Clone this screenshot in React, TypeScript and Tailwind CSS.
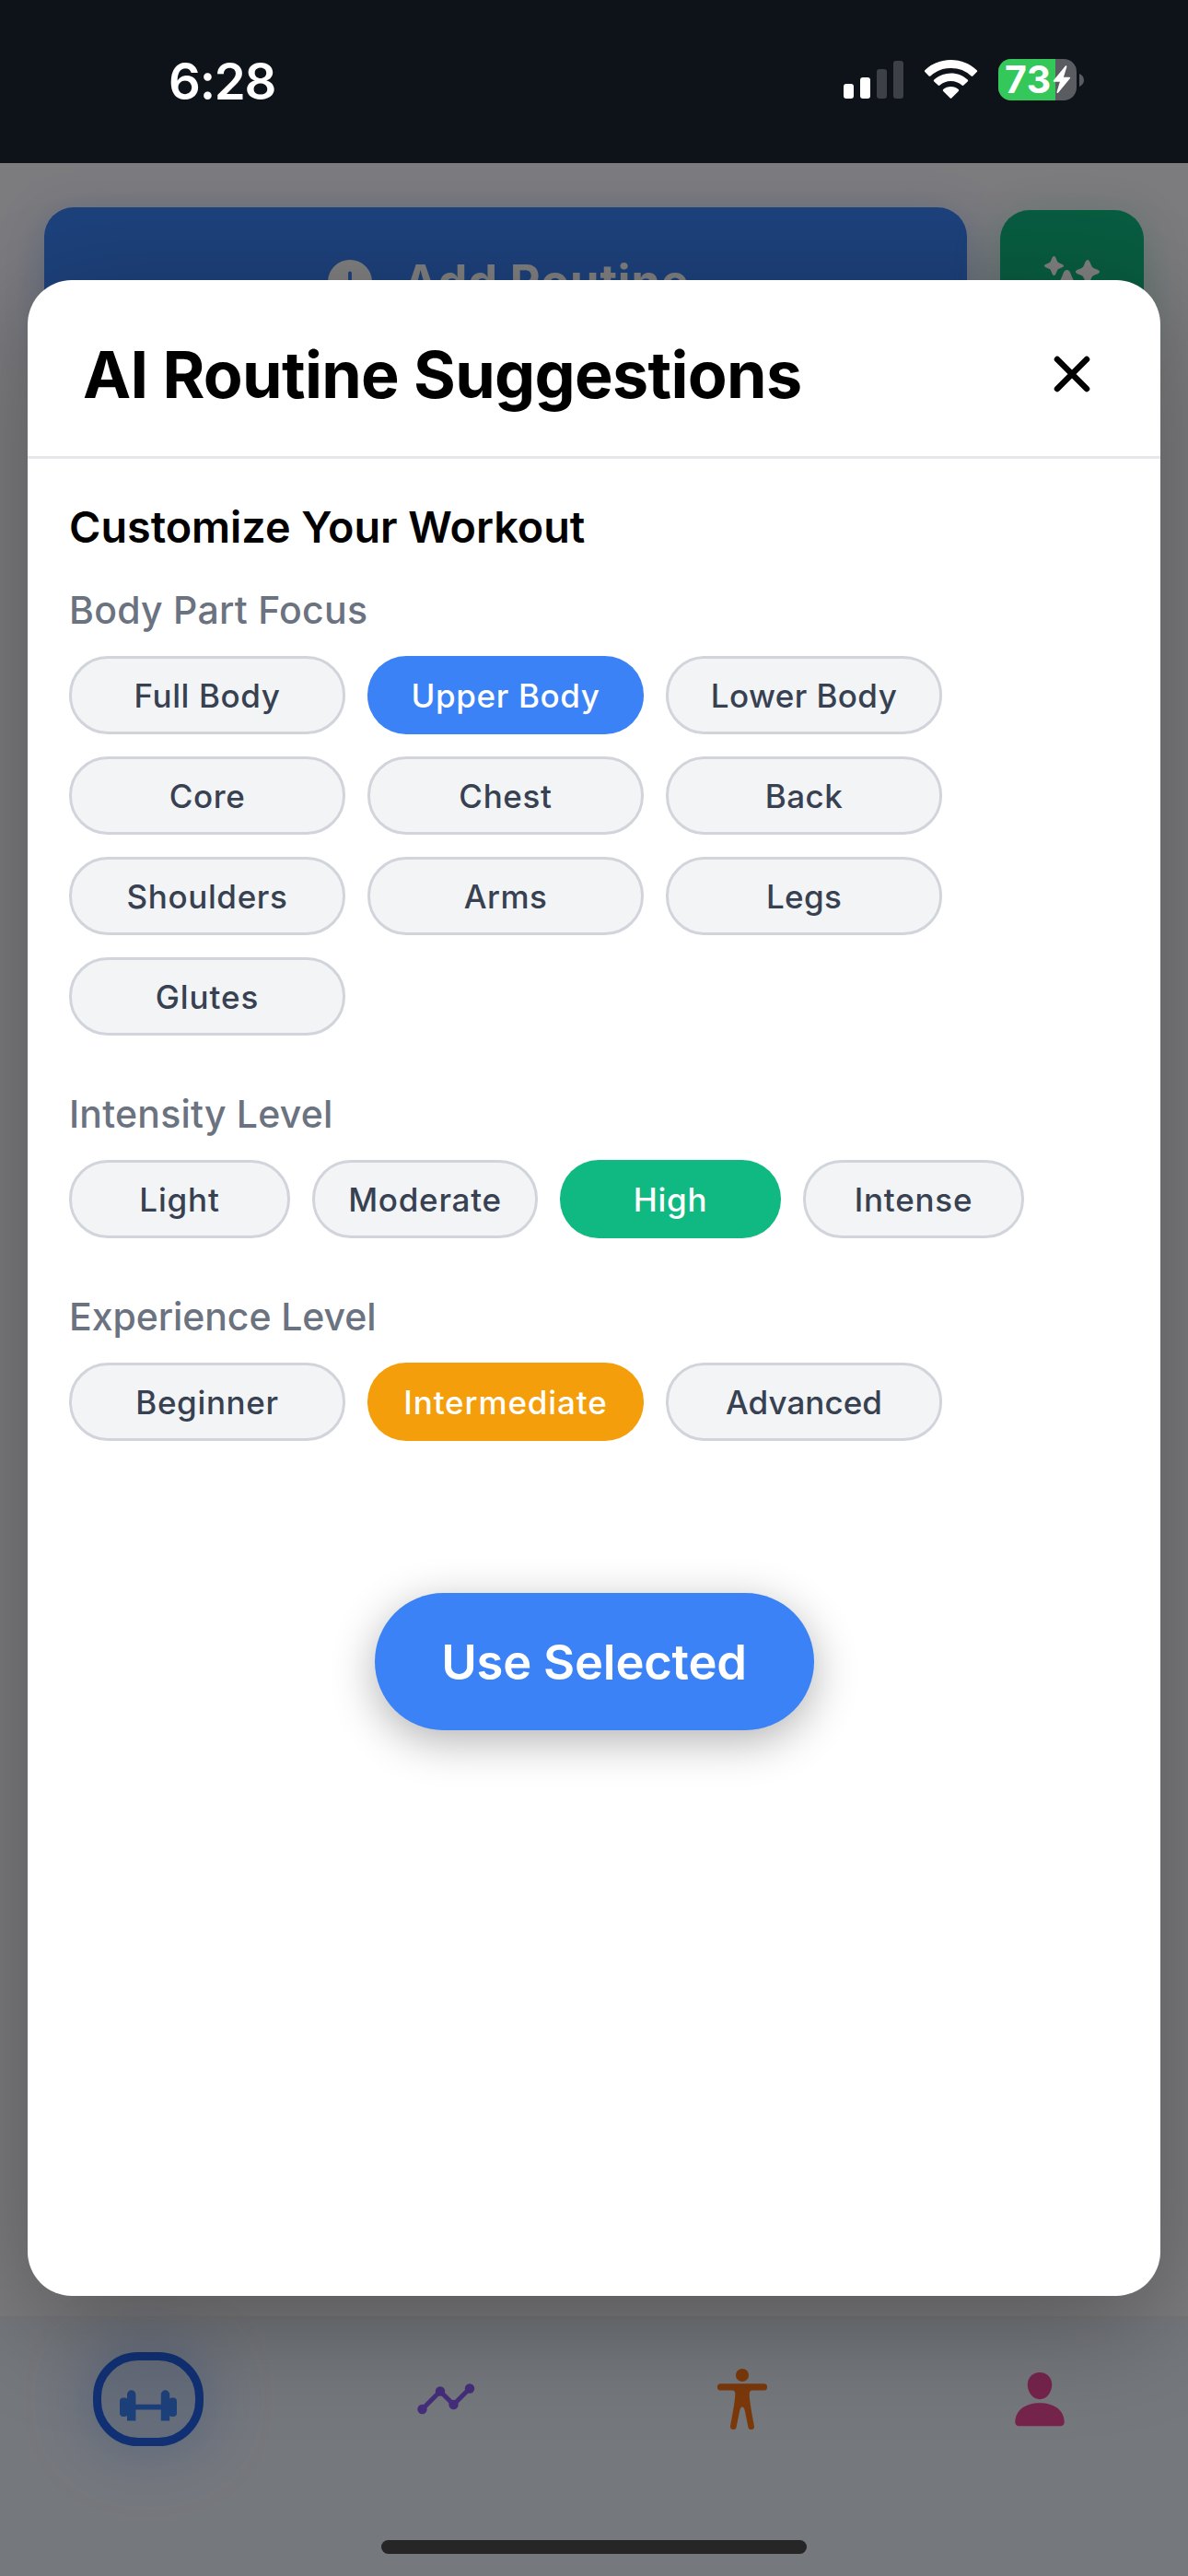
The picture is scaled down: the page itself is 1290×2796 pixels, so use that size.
import React from "react";

type Option = { label: string; tracking: string; width: string };

const bodyParts: Option[] = [
  { label: "Full Body", tracking: "tracking-[0.6px]", width: "w-[300px]" },
  { label: "Upper Body", tracking: "tracking-[0.65px]", width: "w-[300px]" },
  { label: "Lower Body", tracking: "tracking-[0.4px]", width: "w-[300px]" },
  { label: "Core", tracking: "tracking-[0.6px]", width: "w-[300px]" },
  { label: "Chest", tracking: "tracking-[0.65px]", width: "w-[300px]" },
  { label: "Back", tracking: "tracking-[0.5px]", width: "w-[300px]" },
  { label: "Shoulders", tracking: "tracking-[0.65px]", width: "w-[300px]" },
  { label: "Arms", tracking: "tracking-[0.4px]", width: "w-[300px]" },
  { label: "Legs", tracking: "tracking-[0.3px]", width: "w-[300px]" },
  { label: "Glutes", tracking: "tracking-[0.9px]", width: "w-[300px]" },
];

const intensities: Option[] = [
  { label: "Light", tracking: "tracking-[0.8px]", width: "w-[240px]" },
  { label: "Moderate", tracking: "tracking-[0.75px]", width: "w-[245px]" },
  { label: "High", tracking: "tracking-[0.7px]", width: "w-[240px]" },
  { label: "Intense", tracking: "tracking-[0.75px]", width: "w-[240px]" },
];

const levels: Option[] = [
  { label: "Beginner", tracking: "tracking-[0.65px]", width: "w-[300px]" },
  { label: "Intermediate", tracking: "tracking-[0.88px]", width: "w-[300px]" },
  { label: "Advanced", tracking: "tracking-[0.05px]", width: "w-[300px]" },
];

function Chips({ options, selected, active }: { options: Option[]; selected: string; active: string }) {
  return (
    <div className="mt-[25px] flex flex-wrap gap-6">
      {options.map((o) => (
        <button
          key={o.label}
          className={`flex h-[85px] items-center justify-center rounded-[42px] pt-[1px] text-[35px] font-medium leading-none ${o.width} ${o.tracking} ${
            o.label === selected ? active : "border-[3px] border-[#d1d5db] bg-[#f3f4f6] text-[#374151]"
          }`}
        >
          {o.label}
        </button>
      ))}
    </div>
  );
}

function StatusBar() {
  return (
    <div className="relative z-20 flex h-[177px] shrink-0 items-start bg-[#0e131a] text-white">
      <div className="ml-[183px] mt-[58px] text-[54.5px] font-semibold leading-[60px] tracking-[-1.2px]">6:28</div>
      <div className="ml-auto mr-[113px] mt-[64px] flex">
        <svg width="66" height="46" viewBox="0 0 66 46" className="mr-[22px]">
          <rect x="0" y="27" width="11" height="16" rx="3" fill="#fff" />
          <rect x="18" y="20" width="11" height="23" rx="3" fill="#fff" />
          <rect x="36" y="11" width="11" height="32" rx="3" fill="#3e4048" />
          <rect x="54" y="2" width="11" height="41" rx="3" fill="#3e4048" />
        </svg>
        <svg width="58" height="46" viewBox="0 0 58 46" className="mr-[22px]" fill="#fff">
          <path d="M28.5 1C39.5 1 49.3 5.200 56.700 12.200a1.300 1.300 0 0 1 0 1.900l-4.300 4.300a1.300 1.300 0 0 1-1.800 0A32 32 0 0 0 28.500 10 32 32 0 0 0 6.400 18.400a1.300 1.300 0 0 1-1.800 0L.3 14.100a1.300 1.300 0 0 1 0-1.900C7.700 5.200 17.500 1 28.500 1z" />
          <path d="M28.500 15.500c7 0 13.300 2.600 18.200 7a1.300 1.300 0 0 1 0 1.900l-4.300 4.200a1.400 1.400 0 0 1-1.900 0 18 18 0 0 0-24 0 1.400 1.400 0 0 1-1.900 0l-4.300-4.200a1.300 1.300 0 0 1 0-1.900c4.900-4.400 11.200-7 18.200-7z" />
          <path d="M28.500 30c3.200 0 6.100 1.200 8.300 3.100a1.200 1.200 0 0 1 0 1.800l-7.300 7.400a1.400 1.400 0 0 1-2 0l-7.300-7.400a1.200 1.200 0 0 1 0-1.800c2.200-1.900 5.100-3.100 8.300-3.100z" />
        </svg>
        <div className="flex">
          <div className="flex h-[45px] w-[85px] items-center rounded-[14px] bg-[#5a5c62]">
            <div className="flex h-[45px] w-[62px] shrink-0 items-center rounded-l-[14px] bg-[#34c759] pl-[7px] text-[41px] font-bold leading-[45px] tracking-[0.6px]">
              73
            </div>
            <svg width="20" height="31" viewBox="0 0 20 31" className="-ml-[3px]" fill="#fff">
              <path d="M13.700.7 1 16.200c-.7.9-.2 1.500.6 1.500h6.300L4.600 28.600c-.5 1.500.8 1.900 1.600.9L18.800 14.300c.7-.9.3-1.600-.6-1.600h-6.300L15.300 1.700C15.700.2 14.500-.2 13.700.7z" />
            </svg>
          </div>
          <svg width="5" height="14" viewBox="0 0 5 14" className="ml-[3px] mt-4">
            <path d="M0 0c3 1.200 5 3.900 5 7s-2 5.800-5 7z" fill="#5a5c62" />
          </svg>
        </div>
      </div>
    </div>
  );
}

function Sparkles() {
  return (
    <svg width="72" height="72" viewBox="0 0 72 72" fill="#fff">
      <path d="M14.500 6c1.600 0 2.300 3 3.400 5.300.5 1 .9 1.400 1.900 1.900 2.200 1.100 5.200 1.800 5.200 3.300s-3 2.300-5.200 3.300c-1 .5-1.400.9-1.900 1.900C16.800 24 16.100 27 14.500 27s-2.300-3-3.400-5.300c-.5-1-.9-1.400-1.900-1.900C7 18.800 4 18 4 16.500s3-2.200 5.200-3.300c1-.5 1.400-.9 1.900-1.900C12.200 9 12.900 6 14.500 6z" />
      <path d="M51 10c2 0 3 4 4.400 6.800.6 1.200 1 1.700 2.200 2.200 2.800 1.300 6.400 2.200 6.400 4s-3.600 2.700-6.400 4c-1.200.5-1.600 1-2.200 2.200C54 32 53 36 51 36s-3-4-4.400-6.800c-.6-1.200-1-1.700-2.200-2.200C41.600 25.700 38 24.800 38 23s3.600-2.700 6.400-4c1.200-.5 1.600-1 2.200-2.200C48 14 49 10 51 10z" />
      <path d="M28.500 21c2.200 0 3.500 2 4.200 4.300 3.300 9 5 10.700 12.300 13.700 4 1.600 4 6.400 0 8-7.300 3-9 4.700-12.300 13.700-1.500 4.400-6.900 4.400-8.400 0C21 51.700 19.300 50 12 47c-4-1.600-4-6.400 0-8 7.300-3 9-4.700 12.300-13.700.7-2.300 2-4.300 4.200-4.300z" />
    </svg>
  );
}

function Toolbar() {
  return (
    <div className="flex items-center px-12 pt-12">
      <div className="flex h-[162px] w-[1002px] items-center rounded-[32px] bg-[#3b82f6] pl-[308px] text-white shadow-[0_12px_48px_rgba(59,130,246,0.35)]">
        <svg width="48" height="48" viewBox="0 0 48 48">
          <circle cx="24" cy="24" r="24" fill="#fff" />
          <path d="M24 14.500v19M14.500 24h19" stroke="#3b82f6" strokeWidth="3.800" strokeLinecap="round" />
        </svg>
        <span className="ml-[34px] text-[50.5px] font-bold leading-none tracking-[0.9px]">Add Routine</span>
      </div>
      <div className="ml-9 flex h-[156px] w-[156px] items-center justify-center rounded-[32px] bg-[#10b981] pl-[3px] pt-[4px] shadow-[0_12px_48px_rgba(16,185,129,0.3)]">
        <Sparkles />
      </div>
    </div>
  );
}

function TabBar() {
  return (
    <div className="flex h-[282px] shrink-0 flex-col items-center border-t-[3px] border-[#f0efee] bg-[#ebf0fb] pt-9">
      <div className="grid h-[102px] w-full grid-cols-4 place-items-center">
        <div className="flex h-[102px] w-[120px] items-center justify-center rounded-[49px] border-[9px] border-[#2563eb] bg-[#cddaf6] shadow-[0_0_72px_rgba(59,130,246,0.4)]">
          <svg width="62" height="48" viewBox="0 0 62 48" fill="#3b82f6">
            <rect x="0" y="22.500" width="9" height="20.500" rx="4" />
            <rect x="53" y="22.500" width="9" height="20.500" rx="4" />
            <path d="M8 22h2v21H8zM52 22h2v21h-2z" />
            <path d="M8 47.500V19a4.700 4.700 0 0 1 9.400 0v10.700h27.400V19a4.700 4.700 0 0 1 9.400 0v28.500h-9.400V35.500H17.400v12z" />
          </svg>
        </div>
        <svg width="72" height="72" viewBox="0 0 72 72" fill="#8b5cf6">
          <path d="M10.500 47 30 27.500 44.500 42 62 24.500" fill="none" stroke="#8b5cf6" strokeWidth="5" />
          <circle cx="10.500" cy="47" r="5.200" />
          <circle cx="30" cy="27.500" r="5.200" />
          <circle cx="44.500" cy="42" r="5.200" />
          <circle cx="62" cy="24.500" r="5.200" />
        </svg>
        <svg width="72" height="72" viewBox="0 0 72 72" fill="#f97316">
          <circle cx="36" cy="10" r="7.100" />
          <path d="M12.500 19.300h47a3.600 3.600 0 0 1 0 7.200H47c-2.400 0-3.500 1.500-3.300 4.500.3 9 3.600 25 5.300 34.500.7 4.200-5.700 5-6.600 1L39 49.500C38.300 46 37.400 44.500 36 44.500s-2.300 1.500-3 5l-3.400 17c-.9 4-7.300 3.200-6.600-1C24.700 56 28 40 28.300 31c.2-3-.9-4.500-3.300-4.500H12.500a3.600 3.600 0 0 1 0-7.200z" />
        </svg>
        <svg width="72" height="72" viewBox="0 0 72 72" fill="#ec4899">
          <path d="M36 7c7.600 0 13.200 5.500 13.200 13.300 0 8.600-5.800 15.900-13.200 15.900s-13.200-7.300-13.200-15.900C22.800 12.500 28.400 7 36 7z" />
          <path d="M36 40.200c15.500 0 26.700 8 26.700 20.800 0 2.700-1.700 4.200-4.200 4.200h-45c-2.500 0-4.200-1.500-4.200-4.200C9.300 48.200 20.500 40.200 36 40.200z" />
        </svg>
      </div>
      <div className="mt-[102px] h-[15px] w-[462px] rounded-full bg-[#4c4c4c]" />
    </div>
  );
}

function SectionLabel({ children, className }: { children: React.ReactNode; className: string }) {
  return <div className={`text-[41px] font-medium leading-[50px] text-[#6b7280] ${className}`}>{children}</div>;
}

function SuggestionsModal() {
  return (
    <div className="flex h-[2188px] flex-col rounded-[48px] bg-white shadow-[0_30px_120px_rgba(0,0,0,0.3)]">
      <div className="flex h-[194px] shrink-0 items-center justify-between border-b-[3px] border-[#e5e7eb] pb-[1px] pl-[60px] pr-[76px] pt-[16px]">
        <h1 className="text-[70px] font-bold leading-none tracking-[-0.69px] text-black">AI Routine Suggestions</h1>
        <svg width="40" height="40" viewBox="0 0 40 40" className="-mt-[2px]">
          <path d="M4 4l32 32M36 4L4 36" stroke="#000" strokeWidth="6.500" strokeLinecap="round" />
        </svg>
      </div>
      <div className="flex flex-col px-[45px] pt-[44px]">
        <h2 className="text-[46.7px] font-semibold leading-[60px] text-black">Customize Your Workout</h2>
        <SectionLabel className="mt-[35px] tracking-[0.25px]">Body Part Focus</SectionLabel>
        <Chips options={bodyParts} selected="Upper Body" active="bg-[#3b82f6] text-white" />
        <SectionLabel className="mt-[60px] tracking-[0.2px]">Intensity Level</SectionLabel>
        <Chips options={intensities} selected="High" active="bg-[#10b981] text-white" />
        <SectionLabel className="mt-[60px] tracking-[-0.08px]">Experience Level</SectionLabel>
        <Chips options={levels} selected="Intermediate" active="bg-[#f59e0b] text-white" />
        <button className="mt-[165px] flex h-[149px] w-[477px] items-center justify-center self-center rounded-[75px] bg-[#3b82f6] pt-[1px] text-[52.5px] font-semibold leading-none tracking-[-0.21px] text-white shadow-[0_12px_48px_rgba(0,0,0,0.3)]">
          Use Selected
        </button>
      </div>
    </div>
  );
}

export default function App() {
  return (
    <div className="relative flex h-[2796px] w-[1290px] flex-col overflow-hidden bg-[#f8f6fc] font-['Inter',sans-serif]">
      <StatusBar />
      <div className="flex-1">
        <Toolbar />
      </div>
      <TabBar />
      <div className="absolute inset-0 z-10 bg-black/50 px-[30px] pt-[304px]">
        <SuggestionsModal />
      </div>
    </div>
  );
}
